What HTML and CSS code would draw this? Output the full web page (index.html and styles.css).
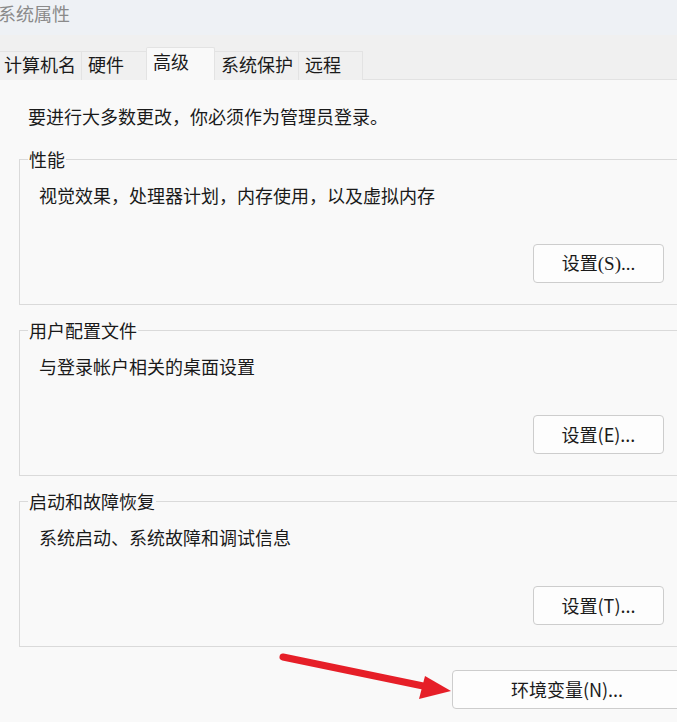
FILE: index.html
```html
<!DOCTYPE html>
<html lang="zh-CN">
<head>
<meta charset="utf-8">
<title>系统属性</title>
<link rel="stylesheet" href="styles.css">
</head>
<body>
<div class="window">
  <div class="titlebar"><span class="title">系统属性</span></div>
  <div class="tabs">
    <div class="tab first">计算机名</div>
    <div class="tab">硬件</div>
    <div class="tab selected">高级</div>
    <div class="tab">系统保护</div>
    <div class="tab last">远程</div>
  </div>
  <div class="panel">
    <p class="intro">要进行大多数更改，你必须作为管理员登录。</p>
    <fieldset class="group">
      <legend>性能</legend>
      <p class="desc">视觉效果，处理器计划，内存使用，以及虚拟内存</p>
      <div class="btnrow"><button class="btn">设置<span class="serif">(S)...</span></button></div>
    </fieldset>
    <fieldset class="group">
      <legend>用户配置文件</legend>
      <p class="desc">与登录帐户相关的桌面设置</p>
      <div class="btnrow"><button class="btn">设置(E)...</button></div>
    </fieldset>
    <fieldset class="group">
      <legend>启动和故障恢复</legend>
      <p class="desc">系统启动、系统故障和调试信息</p>
      <div class="btnrow"><button class="btn">设置(T)...</button></div>
    </fieldset>
    <div class="footer"><button class="btn env">环境变量(N)...</button></div>
  </div>
  <svg class="arrow" width="677" height="722" viewBox="0 0 677 722" aria-hidden="true">
    <line x1="283" y1="657" x2="428" y2="687" stroke="#e61f28" stroke-width="7" stroke-linecap="round"/>
    <polygon points="451,691 425,676 419,699" fill="#e61f28"/>
  </svg>
</div>
</body>
</html>
```
FILE: styles.css
```css
html, body {
  margin: 0;
  padding: 0;
}
body {
  background: #f9f9f9;
  overflow: hidden;
  font-family: "Noto Sans CJK SC", "Microsoft YaHei", sans-serif;
  font-size: 18px;
  color: #1a1a1a;
}
.window {
  position: relative;
  width: 677px;
  height: 722px;
  overflow: hidden;
}
.titlebar {
  height: 35px;
  background: #eef1f5;
}
.title {
  display: block;
  margin-left: -2px;
  line-height: 26px;
  color: #8a8a8a;
}
.tabs {
  display: flex;
  align-items: flex-end;
  height: 45px;
  box-sizing: border-box;
  background: #f0f0f0;
  border-bottom: 1px solid #e2e2e2;
}
.tab {
  box-sizing: border-box;
  height: 29px;
  min-width: 65px;
  padding: 0 5px 0 6px;
  line-height: 24px;
  border-top: 1px solid #e3e3e3;
  border-left: 1px solid #e3e3e3;
  background: #f0f0f0;
  margin-bottom: -1px;
  white-space: nowrap;
}
.tab.first {
  margin-left: -3px;
}
.tab.last {
  border-right: 1px solid #e3e3e3;
}
.tab.selected {
  height: 33px;
  min-width: 69px;
  line-height: 26px;
  background: #f9f9f9;
  border: 1px solid #e3e3e3;
  border-bottom: none;
  border-radius: 2px 2px 0 0;
}
.tab.selected + .tab {
  border-left: none;
}
.panel {
  padding-top: 25px;
}
.intro {
  margin: 0 0 0 28px;
  line-height: 22px;
}
.group {
  margin: 14px 0 0 19px;
  padding: 0;
  width: 680px;
  border: 1px solid #dadada;
  min-inline-size: 0;
}
.intro + .group {
  margin-top: 21px;
}
.group legend {
  margin-left: 8px;
  padding: 0 1px;
  line-height: 22px;
}
.desc {
  margin: 14px 0 0 19px;
  line-height: 22px;
}
.btnrow {
  display: flex;
  justify-content: flex-end;
  margin-top: 38px;
  padding: 0 36px 21px 0;
}
.btn {
  box-sizing: border-box;
  width: 131px;
  height: 39px;
  padding: 0 0 2px;
  border: 1px solid #cdcdcd;
  border-radius: 4px;
  background: #fdfdfd;
  font-family: "Noto Sans CJK SC", "Microsoft YaHei", sans-serif;
  font-size: 18px;
  color: #1a1a1a;
  line-height: 22px;
}
.serif {
  font-family: "Liberation Serif", serif;
  font-size: 19px;
}
.footer {
  display: flex;
  margin-top: 23px;
  padding-left: 452px;
}
.btn.env {
  width: 230px;
  flex: none;
}
.arrow {
  position: absolute;
  left: 0;
  top: 0;
  pointer-events: none;
}
```
